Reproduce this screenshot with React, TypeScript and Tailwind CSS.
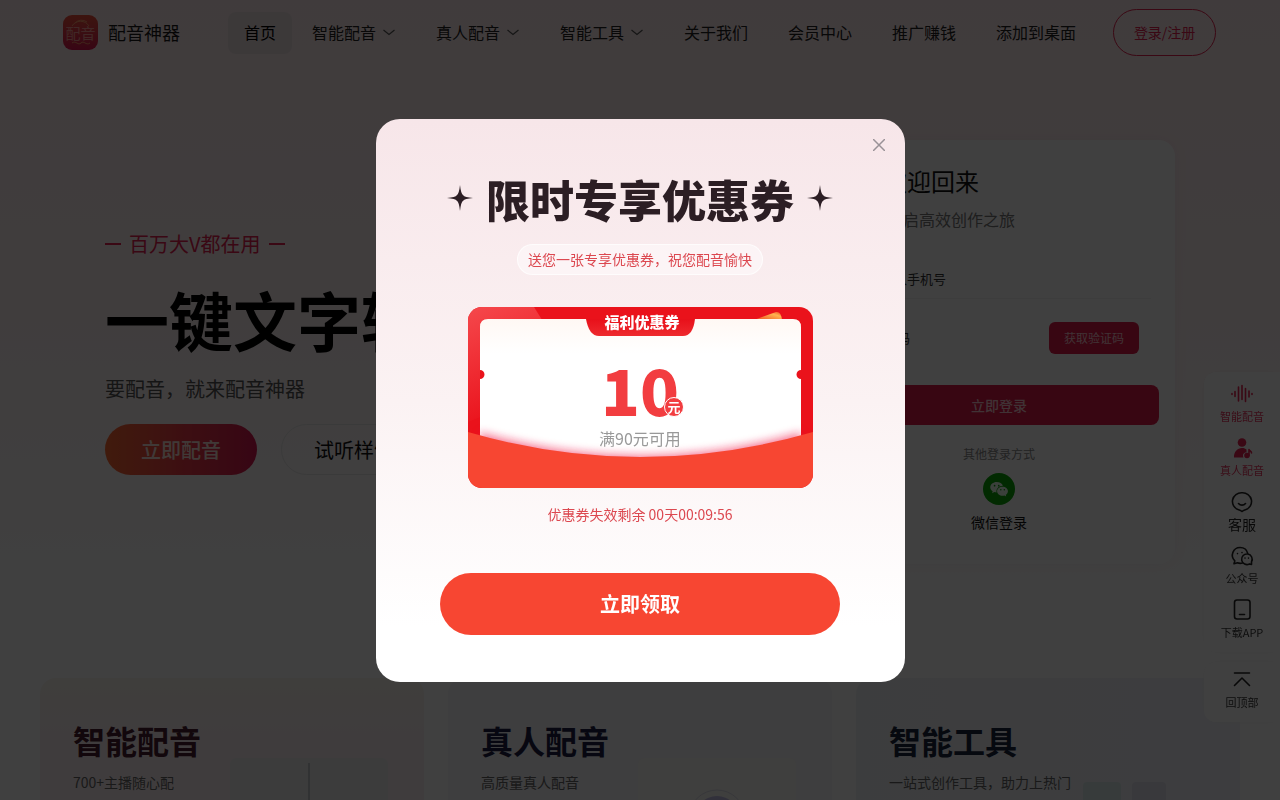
import type { ReactNode } from "react";

const NAV = [
  { label: "智能配音", menu: true },
  { label: "真人配音", menu: true },
  { label: "智能工具", menu: true },
  { label: "关于我们", menu: false },
  { label: "会员中心", menu: false },
  { label: "推广赚钱", menu: false },
  { label: "添加到桌面", menu: false },
];

function Logo() {
  return (
    <span className="relative flex size-[35px] items-center justify-center rounded-[9px] bg-linear-to-b from-[#f0503c] to-[#dc1450]">
      <svg viewBox="0 0 35 35" className="absolute inset-0 size-full" fill="none" stroke="#ff9a6a" strokeWidth="1" aria-hidden="true">
        <path d="M9 11a10 10 0 0 1 17 0M12 8a9 9 0 0 1 12-1M9 28c4-3 6 3 9 0s5 3 9 0" />
      </svg>
      <span className="relative text-[15px] leading-none text-[#ff9d97]">配音</span>
    </span>
  );
}

function Header() {
  return (
    <header className="flex h-[65px] items-center pl-[63px]">
      <a href="#home" className="flex shrink-0 items-center gap-2.5 text-[18px] text-[#1a1a1a]">
        <Logo />
        配音神器
      </a>
      <nav className="ml-12 flex items-center text-[16px] whitespace-nowrap text-[#222]">
        <a href="#home" className="flex h-[42px] items-center rounded-lg bg-[#efe2e4] px-4 pb-0.5 text-black">
          首页
        </a>
        {NAV.map((n) => (
          <a key={n.label} href="#nav" className="flex items-center gap-1.5 px-5 pb-0.5">
            {n.label}
            {n.menu && (
              <svg viewBox="0 0 14 14" className="size-3.5" fill="none" stroke="#555" strokeWidth="1.2" aria-hidden="true">
                <path d="M1.5 5 7 9.5 12.500 5" />
              </svg>
            )}
          </a>
        ))}
      </nav>
      <button className="ml-[17px] h-[47px] w-[103px] shrink-0 rounded-full border border-[#e6214f] text-[14px] text-[#e6214f]">
        登录/注册
      </button>
    </header>
  );
}

function Hero() {
  return (
    <section className="flex min-w-0 flex-col items-start">
      <p className="flex h-8 items-center gap-2 text-[20px] text-[#e6214f]">
        <span className="h-0.5 w-4 bg-[#e6214f]" />
        百万大V都在用
        <span className="h-0.5 w-4 bg-[#e6214f]" />
      </p>
      <h1 className="mt-2.5 text-[64px] leading-[96px] font-bold whitespace-nowrap text-black">一键文字转语音</h1>
      <p className="mt-2 text-[20px] leading-[30px] text-[#555]">要配音，就来配音神器</p>
      <div className="mt-5 flex gap-6">
        <button className="h-[51px] w-[152px] rounded-full bg-linear-to-r from-[#ff6a32] via-[#f03c46] to-[#d81450] text-[20px] font-medium text-[#ffe4dc]">
          立即配音
        </button>
        <button className="h-[51px] w-[146px] rounded-full border border-[#e8e8e8] text-[20px] text-[#111]">试听样例</button>
      </div>
    </section>
  );
}

function WechatMark({ className }: { className: string }) {
  return (
    <svg viewBox="0 0 24 24" className={className} aria-hidden="true">
      <path
        fill="#eaffea"
        d="M9.200 3.500C4.900 3.500 1.500 6.300 1.500 9.800c0 2 1.100 3.800 2.900 5l-.7 2.300 2.700-1.400c.8.200 1.700.4 2.700.4-.9-4.500 2.900-8 7.600-7.900-.7-2.700-3.800-4.700-7.500-4.700z"
      />
      <path
        fill="#eaffea"
        d="M16.300 9.200c-3.700 0-6.600 2.400-6.600 5.400s2.900 5.400 6.600 5.400c.8 0 1.500-.1 2.200-.3l2.100 1.200-.5-1.900c1.600-1 2.600-2.600 2.600-4.400 0-3-2.800-5.400-6.400-5.400z"
      />
      <g fill="#0a9a08">
        <circle cx="6.700" cy="8" r="1" />
        <circle cx="11.700" cy="8" r="1" />
        <circle cx="14.200" cy="13" r=".9" />
        <circle cx="18.400" cy="13" r=".9" />
      </g>
    </svg>
  );
}

function LoginCard() {
  return (
    <form className="mt-[75px] flex h-[424px] w-[352px] shrink-0 flex-col rounded-2xl bg-white px-4 pt-[23px] shadow-[0_0_16px_rgba(120,40,60,0.05)]">
      <h2 className="flex gap-5 text-[24px] leading-9 text-[#111]">
        <span>Hi</span>欢迎回来
      </h2>
      <p className="mt-2 text-[16px] leading-6 text-[#777]">登录后开启高效创作之旅</p>
      <div className="mr-2 mt-7 flex h-10 border-b border-[#f4f4f4]">
        <input aria-label="手机号" placeholder="请输入手机号" className="w-full pl-[29px] text-[13px] outline-none placeholder:text-[#333]" />
      </div>
      <div className="mr-5 mt-[19px] flex h-10 items-center">
        <input aria-label="验证码" placeholder="验证码" className="w-full min-w-0 pl-8 text-[13px] outline-none placeholder:text-[#333]" />
        <button type="button" className="h-8 w-[90px] shrink-0 rounded-md bg-[#de1848] text-[12px] text-[#ffc8d2]">
          获取验证码
        </button>
      </div>
      <button type="button" className="mt-[27px] h-10 shrink-0 rounded-lg bg-[#de1848] text-[14px] font-medium text-[#ffc8d2]">
        立即登录
      </button>
      <p className="mt-5 text-center text-[12px] leading-[18px] text-[#888]">其他登录方式</p>
      <button type="button" className="mt-2.5 flex flex-col items-center text-[14px] text-[#111]">
        <span className="mb-[7px] flex size-8 items-center justify-center rounded-full bg-[#08a806]">
          <WechatMark className="size-5" />
        </span>
        微信登录
      </button>
    </form>
  );
}

function FeatureCard({ title, text, tone, titleTone, children }: { title: string; text: string; tone: string; titleTone: string; children: ReactNode }) {
  return (
    <article className={`relative h-[220px] flex-1 rounded-2xl px-[33px] pt-[38px] ${tone}`}>
      <svg viewBox="0 0 164 140" className="absolute top-20 right-[30px] h-[140px] w-[164px]" aria-hidden="true">
        {children}
      </svg>
      <h2 className={`relative text-[32px] leading-12 font-bold ${titleTone}`}>{title}</h2>
      <p className="relative mt-[7px] text-[14px] leading-[22px] text-[#666]">{text}</p>
    </article>
  );
}

function SideItem({ label, active, large, children }: { label: string; active?: boolean; large?: boolean; children: ReactNode }) {
  return (
    <a href="#tool" className={`flex h-[54px] flex-col items-center whitespace-nowrap ${active ? "text-[#e6214f]" : "text-[#222]"}`}>
      <svg viewBox="0 0 24 24" className="size-6" fill="none" stroke="currentColor" strokeWidth="1.600" strokeLinecap="round" strokeLinejoin="round" aria-hidden="true">
        {children}
      </svg>
      <span className={large ? "text-[14px] leading-5" : "text-[11px] leading-5 opacity-90"}>{label}</span>
    </a>
  );
}

function SideBar() {
  return (
    <aside className="fixed top-[372px] right-0 flex w-[76px] flex-col gap-2.5">
      <div className="rounded-l-xl bg-white pt-2.5 shadow-[0_0_14px_rgba(0,0,0,0.04)]">
        <SideItem label="智能配音" active>
          <path d="M2 11.500v1M5 9.500v5M8.500 5v14M12 3.500v14M15.500 6.500v13M19 9v6M22 11.500v1" />
        </SideItem>
        <SideItem label="真人配音" active>
          <circle cx="12" cy="6.500" r="4.300" fill="currentColor" stroke="none" />
          <path d="M4 21.500c-.5-5.500 3.500-9.500 8-9.500 2 0 3.500.6 4.500 1.500v3c-2.500-.5-4.500 2-3 5z" fill="currentColor" stroke="none" />
          <circle cx="17" cy="19.500" r="2" fill="currentColor" />
          <path d="M19 19.500v-6c.5 1.500 2.500 1.500 2.500 3.500" />
        </SideItem>
        <SideItem label="客服" large>
          <path d="M12 21.500c-1-1-2-1.300-3.500-1.800A9 8.700 0 0 1 12 2.800a9 8.700 0 0 1 3.500 16.900c-1.500.5-2.500.8-3.500 1.800zM8.500 13.500c1.800 2.200 5.200 2.200 7 0" />
        </SideItem>
        <SideItem label="公众号">
          <path d="M12.500 19c-1.700.5-3.500.4-5-.2l-3.500 1 .8-3A7.700 7.700 0 0 1 10 3.500c4 0 7 2.500 7.700 6M21.500 20.500l-2-.6a5.300 5.300 0 1 1 2-2zM7.500 9.500v.1M12 8.500v.1M15 14v.1M18.500 14v.1" />
        </SideItem>
        <SideItem label="下载APP">
          <rect x="4.500" y="2" width="15.500" height="19" rx="2.500" />
          <path d="M9.500 16.500h5" />
        </SideItem>
      </div>
      <div className="rounded-l-xl bg-white pt-1.5 shadow-[0_0_14px_rgba(0,0,0,0.04)]">
        <SideItem label="回顶部">
          <path d="M4.500 5h15M4.500 17.500l7.500-7.500 7.500 7.500" />
        </SideItem>
      </div>
    </aside>
  );
}

function Sparkle() {
  return (
    <svg viewBox="0 0 26 26" className="mb-0.5 size-[26px]" fill="#2c1e24" aria-hidden="true">
      <path d="M13 0Q14 9.200 16.200 10.200Q17.500 12.200 26 13Q17.500 13.800 16.200 15.800Q14 16.800 13 26Q12 16.800 9.800 15.800Q8.500 13.800 0 13Q8.500 12.200 9.800 10.200Q12 9.200 13 0Z" />
    </svg>
  );
}

function Coupon() {
  return (
    <div className="relative mt-8 h-[181px] w-[345px]">
      <svg viewBox="0 0 345 181" className="absolute inset-0 size-full" aria-hidden="true">
        <defs>
          <clipPath id="ticket">
            <rect width="345" height="181" rx="14" />
          </clipPath>
          <linearGradient id="sheen" x1="0" y1="0" x2="0.300" y2="1">
            <stop offset="0" stopColor="#f5484c" />
            <stop offset="1" stopColor="#ea121b" />
          </linearGradient>
          <linearGradient id="gold" x1="0" y1="1" x2="1" y2="0">
            <stop offset="0" stopColor="#ee4a1c" />
            <stop offset="0.700" stopColor="#ffb450" />
            <stop offset="1" stopColor="#f04a20" />
          </linearGradient>
          <linearGradient id="paper" x1="0" y1="0" x2="0" y2="1">
            <stop offset="0" stopColor="#fff8f4" />
            <stop offset="0.250" stopColor="#fff" />
          </linearGradient>
          <linearGradient id="tab" x1="0" y1="0" x2="0" y2="1">
            <stop offset="0" stopColor="#e8101a" />
            <stop offset="1" stopColor="#ee2a2e" />
          </linearGradient>
          <filter id="soft" x="-10%" y="-30%" width="120%" height="160%">
            <feGaussianBlur stdDeviation="4" />
          </filter>
        </defs>
        <g clipPath="url(#ticket)">
          <rect width="345" height="181" fill="#ea121b" />
          <path d="M0 0H66L76 16 12 40 12 110 0 115Z" fill="url(#sheen)" />
          <path d="M286 13 308 5Q313 4 314 13Z" fill="url(#gold)" />
          <path d="M20 12H325Q333 12 333 20V63A4.500 4.500 0 0 0 333 72V150H12V72A4.500 4.500 0 0 0 12 63V20Q12 12 20 12Z" fill="url(#paper)" />
          <path d="M118 12H227Q225 29 215 29H131Q121 29 118 12Z" fill="url(#tab)" />
          <path d="M12 125Q172 171 333 125V180H12Z" fill="#f01446" opacity="0.550" filter="url(#soft)" />
          <path d="M0 125Q172 175 345 125V181H0Z" fill="#f74632" />
        </g>
      </svg>
      <div className="relative flex flex-col items-center">
        <p className="mt-0.5 pl-1 text-[15px] leading-[26px] font-black text-white">福利优惠券</p>
        <p className="relative mt-[21px] text-[64px] leading-[64px] font-black text-[#f23d40]">
          10
          <span className="absolute right-[-5px] bottom-[3px] flex size-5 items-center justify-center rounded-full border border-white bg-[#f23d40] text-[13px] leading-none font-bold text-white">
            元
          </span>
        </p>
      </div>
      <p className="absolute inset-x-0 top-[119px] text-center text-[16px] leading-6 text-[#999]">满90元可用</p>
    </div>
  );
}

function CouponDialog() {
  return (
    <div className="fixed inset-0 flex items-center justify-center bg-black/75">
      <div
        role="dialog"
        aria-modal="true"
        aria-labelledby="coupon-title"
        className="relative flex w-[529px] flex-col items-center rounded-3xl bg-linear-to-b from-[#f7e6e9] via-[#fbf2f3] via-50% to-white to-90% pt-12 pb-[47px]"
      >
        <button aria-label="关闭" className="absolute top-4 right-4 p-0.5">
          <svg viewBox="0 0 12 12" className="m-0.5 size-3" fill="none" stroke="#999297" strokeWidth="1.500" strokeLinecap="round" aria-hidden="true">
            <path d="M.5.5l11 11M11.500.5l-11 11" />
          </svg>
        </button>
        <h2 id="coupon-title" className="flex items-center gap-[13px] text-[44px] leading-16 font-black whitespace-nowrap text-[#2c1e24]">
          <Sparkle />
          限时专享优惠券
          <Sparkle />
        </h2>
        <p className="mt-[13px] rounded-full border border-white/70 bg-white/45 px-2.5 text-[14px] leading-[29px] text-[#dc4850]">
          送您一张专享优惠券，祝您配音愉快
        </p>
        <Coupon />
        <p className="mt-[15px] text-[14px] leading-[22px] text-[#dc4850]">优惠券失效剩余 00天00:09:56</p>
        <button className="mt-12 h-[62px] w-[400px] rounded-full bg-[#f74632] text-[20px] font-bold text-white">立即领取</button>
      </div>
    </div>
  );
}

export default function App() {
  return (
    <div className="h-screen overflow-hidden bg-linear-to-b from-[#ffecee] via-[#fff3f4] via-40% to-white to-75% font-['Noto_Sans_CJK_SC','Noto_Sans',sans-serif]">
      <Header />
      <main>
        <div className="flex h-[613px] justify-between px-[105px]">
          <div className="min-w-0 flex-1 pt-[163px]">
            <Hero />
          </div>
          <LoginCard />
        </div>
        <section className="flex gap-6 px-10">
          <FeatureCard title="智能配音" text="700+主播随心配" tone="bg-linear-to-b from-[#faf6ee] to-[#fbf0f2] to-25%" titleTone="text-[#4a1c30]">
            <rect width="158" height="140" rx="6" fill="#eef0f0" />
            <path d="M79 5v130" stroke="#9aa0a4" strokeWidth="1" />
          </FeatureCard>
          <FeatureCard title="真人配音" text="高质量真人配音" tone="bg-[#f5f5f9]" titleTone="text-[#1c1c44]">
            <rect width="158" height="140" rx="6" fill="#faf9f6" />
            <circle cx="79" cy="60" r="28" fill="none" stroke="#dcdce8" />
            <circle cx="79" cy="60" r="22" fill="#c3bfe8" />
          </FeatureCard>
          <FeatureCard title="智能工具" text="一站式创作工具，助力上热门" tone="bg-linear-to-r from-[#f0f4f6] to-[#f4f4fa]" titleTone="text-[#18243c]">
            <rect x="37" y="24" width="38" height="80" rx="4" fill="#dcebea" />
            <rect x="86" y="24" width="34" height="80" rx="4" fill="#e2e2ee" />
          </FeatureCard>
        </section>
      </main>
      <SideBar />
      <CouponDialog />
    </div>
  );
}
